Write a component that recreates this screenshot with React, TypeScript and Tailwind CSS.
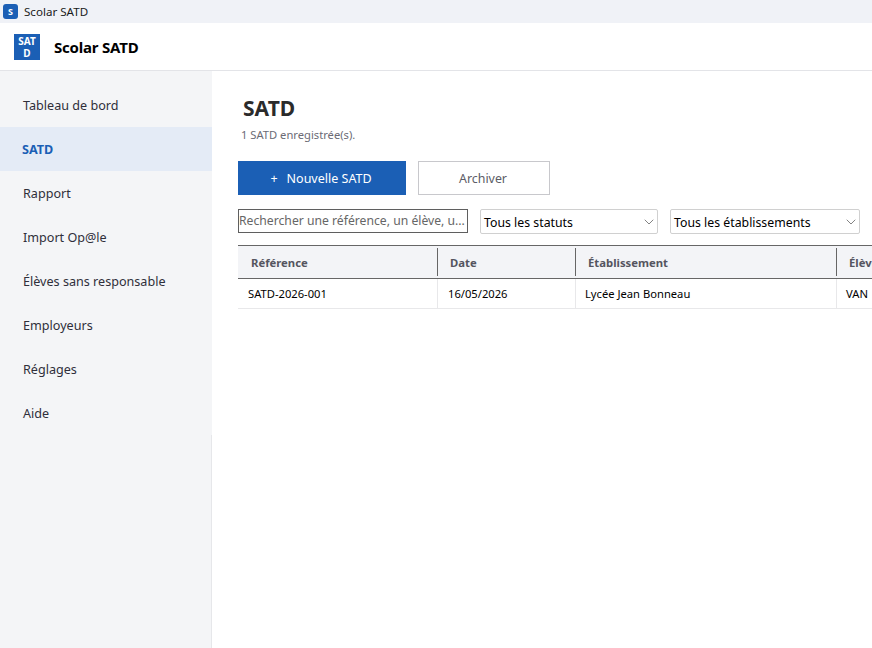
import { ChevronDown } from 'lucide-react';

const navItems = [
  'Tableau de bord',
  'SATD',
  'Rapport',
  'Import Op@le',
  'Élèves sans responsable',
  'Employeurs',
  'Réglages',
  'Aide',
];

const fontClass = "font-['Noto_Sans',sans-serif]";

function FilterSelect({ label, width }: { label: string; width: string }) {
  return (
    <div className={`${width} h-[25px] flex items-center justify-between pl-[3px] bg-white border border-[#d0d0d0] rounded-[2px] text-[12.3px] text-black`}>
      <span className="pt-[3px]">{label}</span>
      <ChevronDown className="w-[16px] h-[16px] mt-[1px] text-[#555]" strokeWidth={1.1} />
    </div>
  );
}

export default function App() {
  return (
    <div className={`${fontClass} w-[872px] h-[648px] overflow-hidden flex flex-col bg-white`}>
      {/* barre de titre */}
      <div className="h-[23px] shrink-0 bg-[#f0f2f7] flex items-center pl-[3px] gap-[6px]">
        <div className="w-[15px] h-[15px] rounded-[3px] bg-[#1b5fb5] text-white text-[9px] font-bold flex items-center justify-center">
          S
        </div>
        <span className="text-[11.6px] text-[#1a1a1a]">Scolar SATD</span>
      </div>

      {/* en-tete */}
      <div className="h-[48px] shrink-0 bg-white border-b border-[#e3e4e8] flex items-center pl-[14px] gap-[14px]">
        <div className="w-[26px] h-[26px] bg-[#1b5fb5] text-white text-[10px] leading-[12px] font-bold text-center flex items-center justify-center">
          SAT D
        </div>
        <span className="pt-[2px] text-[15px] font-bold text-black tracking-[-0.2px]">Scolar SATD</span>
      </div>

      <div className="flex flex-1 min-h-0">
        {/* menu */}
        <div className="w-[212px] shrink-0 bg-[#f4f5f7] flex flex-col pt-[12px]">
          <div className="h-[352px]">
            {navItems.map((item) =>
              item === 'SATD' ? (
                <div key={item} className="h-[44px] flex items-center pl-[22px] pt-[2px] bg-[#e4ebf6] text-[12.6px] font-bold text-[#1b5fb5]">
                  {item}
                </div>
              ) : (
                <div key={item} className="h-[44px] flex items-center pl-[23px] pt-[2px] text-[12.6px] text-[#2f2f3a]">
                  {item}
                </div>
              )
            )}
          </div>
          <div className="flex-1 border-r border-[#e6e7ea]" />
        </div>

        {/* contenu */}
        <div className="flex-1 min-w-0 overflow-hidden pl-[26px] pt-[22px]">
          <h1 className="pl-[5px] text-[21px] leading-[30px] font-bold text-[#2b2b2b]">SATD</h1>
          <p className="pl-[3px] mt-[4px] text-[11.2px] leading-[16px] text-[#6b6b75]">1 SATD enregistrée(s).</p>

          <div className="flex gap-[12px] mt-[18px]">
            <button className="w-[168px] h-[34px] pt-[2px] pr-[2px] bg-[#1b5fb5] text-white text-[12.5px] flex items-center justify-center gap-[9px]">
              <span>+</span>
              <span>Nouvelle SATD</span>
            </button>
            <button className="w-[132px] h-[34px] pt-[2px] pr-[2px] bg-white border border-[#c8c8cc] text-[#5c5c66] text-[12.4px]">
              Archiver
            </button>
          </div>

          <div className="flex items-start gap-[12px] mt-[14px]">
            <div className="w-[230px] h-[24px] border border-[#5f5f5f] flex items-center text-[12.2px] text-[#666] whitespace-nowrap overflow-hidden">
              Rechercher une référence, un élève, u...
            </div>
            <FilterSelect label="Tous les statuts" width="w-[178px]" />
            <FilterSelect label="Tous les établissements" width="w-[190px]" />
          </div>

          {/* tableau */}
          <div className="mt-[11px] w-[800px]">
            <div className="h-[34px] flex items-center bg-[#f3f4f7] border-y border-[#666] text-[11.3px] font-bold text-[#55555f]">
              <div className="w-[200px] h-[28px] flex items-center pl-[13px] pt-[2px] border-r border-[#666]">Référence</div>
              <div className="w-[138px] h-[28px] flex items-center pl-[12px] pt-[2px] border-r border-[#666]">Date</div>
              <div className="w-[261px] h-[28px] flex items-center pl-[12px] pt-[2px] border-r border-[#666]">Établissement</div>
              <div className="flex-1 pl-[12px] pt-[2px]">Élève</div>
            </div>
            <div className="h-[30px] flex items-center border-b border-[#e8e8ea] text-[11.2px] text-black">
              <div className="w-[200px] h-full flex items-center pl-[10px] pt-[2px] border-r border-[#e8e8ea]">SATD-2026-001</div>
              <div className="w-[138px] h-full flex items-center pl-[10px] pt-[2px] border-r border-[#e8e8ea]">16/05/2026</div>
              <div className="w-[261px] h-full flex items-center pl-[9px] pt-[2px] border-r border-[#e8e8ea]">Lycée Jean Bonneau</div>
              <div className="flex-1 pl-[9px] pt-[2px]">VAN</div>
            </div>
          </div>
        </div>
      </div>
    </div>
  );
}
